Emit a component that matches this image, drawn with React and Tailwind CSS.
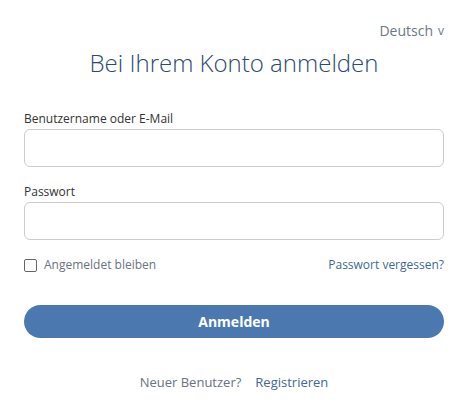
export default function App() {
  return (
    <div className="min-h-screen bg-white" style={{ fontFamily: '"Open Sans", "Liberation Sans", sans-serif' }}>
      <div className="w-[420px] ml-6 pt-[20px]">
        {/* Language */}
        <div className="flex justify-end">
          <button className="text-[14px] text-[#6b7785] flex items-center gap-[5px]">
            Deutsch <span className="text-[12px]">v</span>
          </button>
        </div>

        <h1 className="text-center text-[24px] font-light text-[#2b4a6e] mt-[4px]">Bei Ihrem Konto anmelden</h1>

        <form className="mt-[29px]">
          <label className="block text-[12px] text-[#333] mb-[1px]">Benutzername oder E-Mail</label>
          <input type="text" className="w-full h-[38px] border border-[#ccc] rounded-[6px] px-3 outline-none" />

          <label className="block text-[12px] text-[#333] mt-[16px] mb-[1px]">Passwort</label>
          <input type="password" className="w-full h-[38px] border border-[#ccc] rounded-[6px] px-3 outline-none" />

          <div className="flex items-center justify-between mt-[16px]">
            <label className="flex items-center gap-[7px] text-[12px] text-[#6b7280]">
              <span className="w-[13px] h-[13px] border border-[#666] rounded-[2px] inline-block" />
              Angemeldet bleiben
            </label>
            <a className="text-[12px] text-[#3f6897]">Passwort vergessen?</a>
          </div>

          <button type="button" className="w-full h-[33px] rounded-full bg-[#4b79af] text-white font-bold text-[14px] mt-[31px]">
            Anmelden
          </button>

          <div className="flex justify-center gap-[14px] mt-[35px] text-[13px]">
            <span className="text-[#6b7280]">Neuer Benutzer?</span>
            <a className="text-[#3f6897]">Registrieren</a>
          </div>
        </form>
      </div>
    </div>
  );
}
